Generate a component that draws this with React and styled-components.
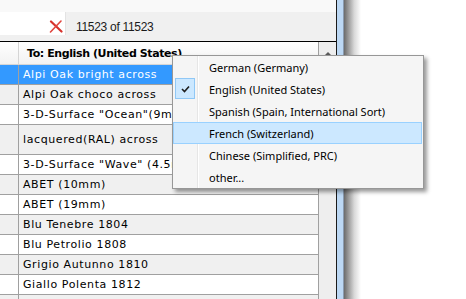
import { createGlobalStyle, styled } from "styled-components";

const GlobalStyle = createGlobalStyle`
  html, body {
    margin: 0;
    padding: 0;
    background: #ffffff;
    overflow: hidden;
  }
`;

const Screen = styled.div`
  position: relative;
  display: flex;
  width: 466px;
  height: 299px;
  overflow: hidden;
  background: #ffffff;
`;

const Window = styled.div`
  display: flex;
  flex-direction: column;
  width: 336px;
  flex: none;
  background: #f0f0f0;
`;

const TopStrip = styled.div`
  height: 12px;
  background: #f9f9f9;
`;

const Toolbar = styled.div`
  display: flex;
  align-items: flex-start;
  height: 29px;
  background: #f0f0f0;
`;

const SearchBox = styled.div`
  display: flex;
  align-items: center;
  justify-content: flex-end;
  width: 66px;
  height: 23px;
  background: #ffffff;
  border-right: 1px solid #e3e3e3;
  padding: 5px 2px 0 0;
  box-sizing: border-box;
`;

const Count = styled.span`
  margin: 8px 0 0 10px;
  font: 12px "Liberation Sans", Arial, sans-serif;
  letter-spacing: -0.3px;
  color: #1a1a1a;
`;

const Table = styled.div`
  display: flex;
  flex: 1;
  border-top: 1px solid #000000;
  overflow: hidden;
`;

const Grid = styled.div`
  flex: 1;
  display: flex;
  flex-direction: column;
  background: #ffffff;
  border-right: 1px solid #a0a0a0;
`;

const HeaderRow = styled.div`
  display: flex;
  height: 22px;
  flex: none;
  background: linear-gradient(#ffffff, #f2f2f2);
  border-bottom: 1px solid #d5d5d5;
`;

const HeaderStub = styled.div`
  width: 18px;
  border-right: 1px solid #d5d5d5;
`;

const HeaderCell = styled.div`
  display: flex;
  align-items: center;
  padding-left: 8px;
  font: bold 11px "DejaVu Sans", Verdana, sans-serif;
  letter-spacing: -0.4px;
  color: #000000;
  white-space: nowrap;
`;

const Row = styled.div`
  display: flex;
  flex: none;
  height: ${(p) => p.$h || 19}px;
  border-bottom: 1px solid #a0a0a0;
  background: ${(p) => (p.$selected ? "#3399ff" : p.$alt ? "#f0f0f0" : "#ffffff")};
  color: ${(p) => (p.$selected ? "#ffffff" : "#000000")};
`;

const Stub = styled.div`
  width: 18px;
  flex: none;
  border-right: 1px solid #a0a0a0;
`;

const Cell = styled.div`
  display: flex;
  align-items: center;
  padding-left: 4px;
  font: 11px "DejaVu Sans", Verdana, sans-serif;
  letter-spacing: 0.6px;
  white-space: nowrap;
  overflow: hidden;
`;

const Scrollbar = styled.div`
  width: 17px;
  flex: none;
  background: #eeeeee;
  display: flex;
  justify-content: center;
  padding-top: 10px;
  box-sizing: border-box;
`;

const ArrowUp = styled.div`
  width: 0;
  height: 0;
  border-left: 4px solid transparent;
  border-right: 4px solid transparent;
  border-bottom: 4px solid #5a5a5a;
`;

const Frame = styled.div`
  display: flex;
  flex: none;
  width: 24px;
  border-left: 1px solid #1a1a1a;
`;

const FrameBlue = styled.div`
  width: 6px;
  background: #bcd8f4;
  border-right: 1px solid #8a9bb0;
`;

const FrameShadow = styled.div`
  flex: 1;
  background: linear-gradient(to right, #6b6b6b, #d8d8d8 60%, #ffffff);
`;

const Menu = styled.div`
  position: absolute;
  left: 172px;
  top: 55px;
  width: 252px;
  box-sizing: border-box;
  border: 1px solid #979797;
  background: #f5f5f5;
  box-shadow: 3px 3px 4px rgba(0, 0, 0, 0.4);
  padding: 0 1px 0 0;

  &::before {
    content: "";
    position: absolute;
    top: 0;
    bottom: 0;
    left: 24px;
    width: 1px;
    background: #e6e6e6;
    border-right: 1px solid #ffffff;
  }
`;

const MenuItem = styled.div`
  position: relative;
  display: flex;
  align-items: center;
  height: 22px;
  box-sizing: border-box;
  padding-left: 35px;
  border: 1px solid ${(p) => (p.$hot ? "#99d1ff" : "transparent")};
  background: ${(p) => (p.$hot ? "#cce8ff" : "transparent")};
  font: 11px "Noto Sans", "Open Sans", sans-serif;
  color: #000000;
  white-space: nowrap;
  z-index: 1;
`;

const CheckBox = styled.div`
  position: absolute;
  left: 1px;
  top: -1px;
  width: 20px;
  height: 21px;
  box-sizing: border-box;
  border: 1px solid #90c8f6;
  background: #cce8ff;
  display: flex;
  align-items: center;
  justify-content: center;
`;

const rows = [
  { text: "Alpi Oak bright across", selected: true },
  { text: "Alpi Oak choco across" },
  { text: '3-D-Surface "Ocean"(9mm) across' },
  { text: "lacquered(RAL) across", h: 29 },
  { text: '3-D-Surface "Wave" (4.5mm) across' },
  { text: "ABET (10mm)" },
  { text: "ABET (19mm)" },
  { text: "Blu Tenebre 1804" },
  { text: "Blu Petrolio 1808" },
  { text: "Grigio Autunno 1810" },
  { text: "Giallo Polenta 1812" },
  { text: "" },
];

const languages = [
  "German (Germany)",
  "English (United States)",
  "Spanish (Spain, International Sort)",
  "French (Switzerland)",
  "Chinese (Simplified, PRC)",
  "other...",
];

function ClearIcon() {
  return (
    <svg width="14" height="13" viewBox="0 0 14 13">
      <path d="M2 1.5 L12.5 11.5" stroke="#d6322c" strokeWidth="2.2" strokeLinecap="round" />
      <path d="M12 1 L1.5 12" stroke="#e0453e" strokeWidth="1.6" strokeLinecap="round" />
    </svg>
  );
}

function CheckIcon() {
  return (
    <svg width="9" height="8" viewBox="0 0 9 8">
      <path d="M1 4 L3.5 6.5 L8 1.5" stroke="#1e1e1e" strokeWidth="1.6" fill="none" />
    </svg>
  );
}

export default function App() {
  return (
    <>
      <GlobalStyle />
      <Screen>
        <Window>
          <TopStrip />
          <Toolbar>
            <SearchBox>
              <ClearIcon />
            </SearchBox>
            <Count>11523 of 11523</Count>
          </Toolbar>
          <Table>
            <Grid>
              <HeaderRow>
                <HeaderStub />
                <HeaderCell>To: English (United States)</HeaderCell>
              </HeaderRow>
              {rows.map((r, i) => (
                <Row key={i} $selected={r.selected} $alt={i % 2 === 1} $h={r.h}>
                  <Stub />
                  <Cell>{r.text}</Cell>
                </Row>
              ))}
            </Grid>
            <Scrollbar>
              <ArrowUp />
            </Scrollbar>
          </Table>
        </Window>
        <Frame>
          <FrameBlue />
          <FrameShadow />
        </Frame>
        <Menu>
          {languages.map((l, i) => (
            <MenuItem key={l} $hot={i === 3}>
              {i === 1 && (
                <CheckBox>
                  <CheckIcon />
                </CheckBox>
              )}
              {l}
            </MenuItem>
          ))}
        </Menu>
      </Screen>
    </>
  );
}
